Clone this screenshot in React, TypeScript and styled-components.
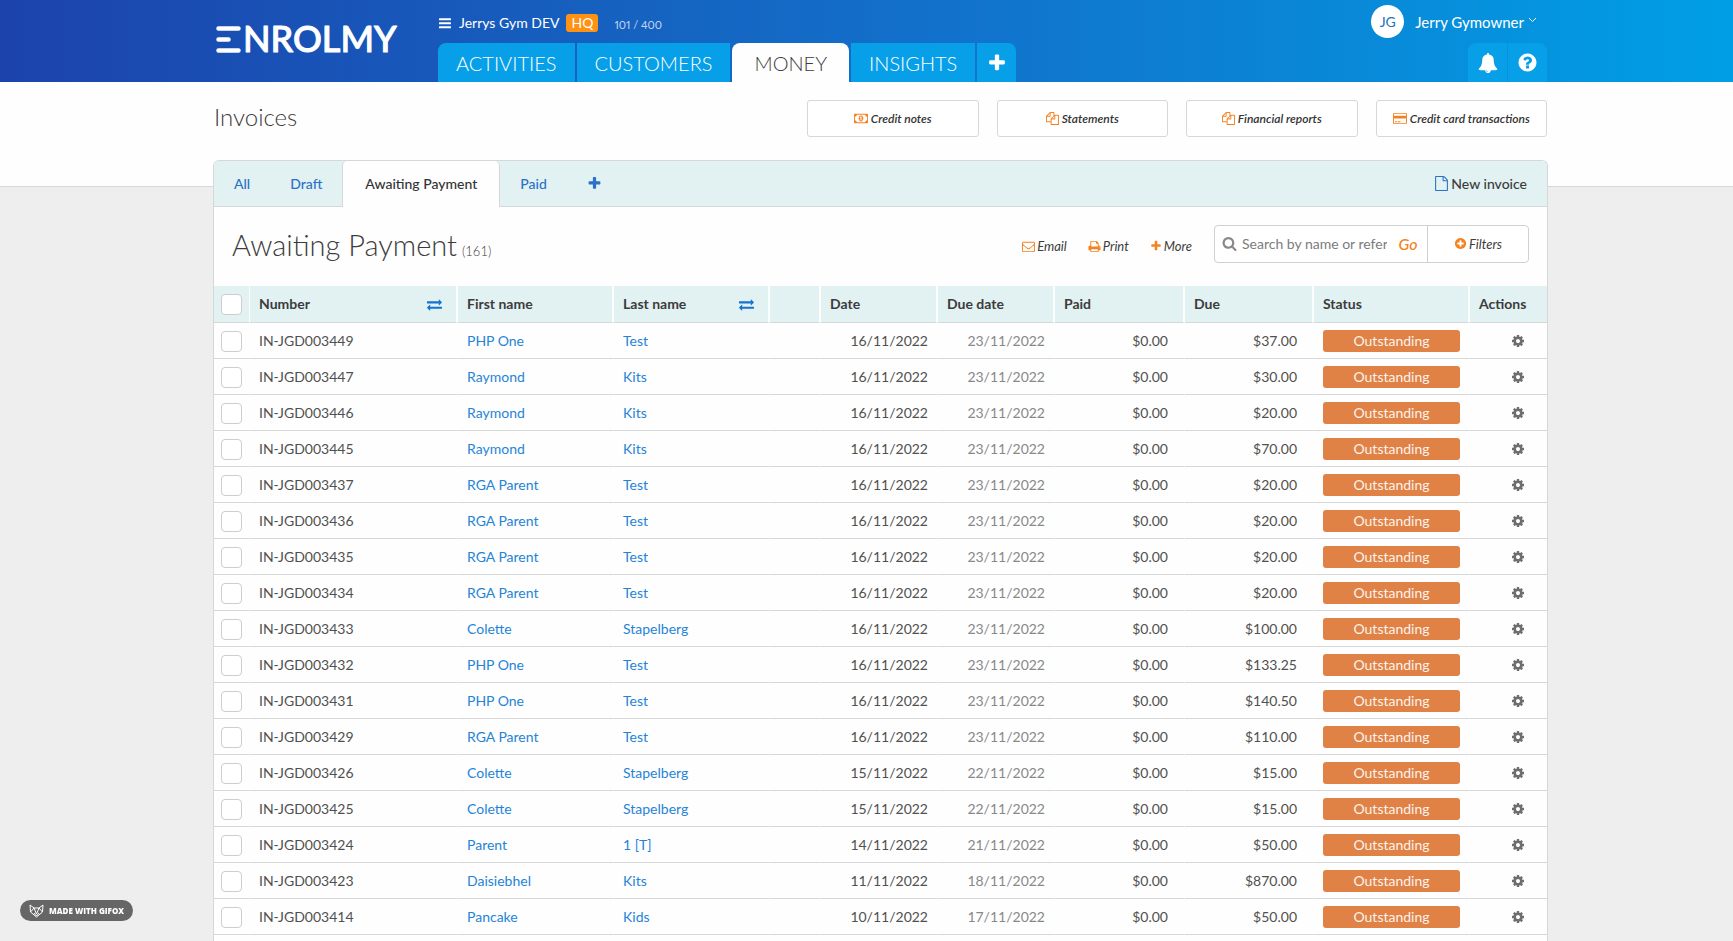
import React from "react";
import styled, { createGlobalStyle } from "styled-components";

const GlobalStyle = createGlobalStyle`
  *, *::before, *::after { box-sizing: border-box; }
  html, body { margin: 0; }
  body {
    font-family: Lato, "Liberation Sans", sans-serif;
    font-size: 15px;
    line-height: 20px;
    color: #3c3c3c;
    background: #eeeeee;
  }
  a { color: inherit; text-decoration: none; }
  button, input { font: inherit; color: inherit; }
  h1, h2, p, ul { margin: 0; padding: 0; font-weight: inherit; }
`;

const glyphs = {
  files: {
    w: 1792,
    d: "M1696 384q40 0 68 28t28 68v1216q0 40-28 68t-68 28h-960q-40 0-68-28t-28-68v-288h-544q-40 0-68-28t-28-68v-672q0-40 20-88t48-76l408-408q28-28 76-48t88-20h416q40 0 68 28t28 68v328q68-40 128-40h416zm-544 213l-299 299h299v-299zm-640-384l-299 299h299v-299zm196 647l316-316v-416h-384v416q0 40-28 68t-68 28h-416v640h512v-256q0-40 20-88t48-76zm956 804v-1152h-384v416q0 40-28 68t-68 28h-416v640h896z",
  },
  money: {
    w: 1920,
    d: "M768 1152h384v-96h-128v-448h-114l-148 137 77 80q42-37 55-57h2v288h-128v96zm512-256q0 70-21 142t-59.5 134-101.5 101-138 39-138-39-101.5-101-59.5-134-21-142 21-142 59.5-134 101.5-101 138-39 138 39 101.5 101 59.5 134 21 142zm512 256v-512q-106 0-181-75t-75-181h-1152q0 106-75 181t-181 75v512q106 0 181 75t75 181h1152q0-106 75-181t181-75zm128-832v1152q0 26-19 45t-45 19h-1792q-26 0-45-19t-19-45v-1152q0-26 19-45t45-19h1792q26 0 45 19t19 45z",
  },
  card: {
    w: 1920,
    d: "M1760 128q66 0 113 47t47 113v1216q0 66-47 113t-113 47h-1600q-66 0-113-47t-47-113v-1216q0-66 47-113t113-47h1600zm-1600 128q-13 0-22.5 9.5t-9.5 22.5v224h1664v-224q0-13-9.5-22.5t-22.5-9.5h-1600zm1600 1280q13 0 22.5-9.5t9.5-22.5v-608h-1664v608q0 13 9.5 22.5t22.5 9.5h1600zm-1504-128v-128h256v128h-256zm384 0v-128h384v128h-384z",
  },
  file: {
    w: 1792,
    d: "M1596 380q28 28 48 76t20 88v1152q0 40-28 68t-68 28h-1344q-40 0-68-28t-28-68v-1600q0-40 28-68t68-28h896q40 0 88 20t76 48zm-444-244v376h376q-10-29-22-41l-313-313q-12-12-41-22zm384 1528v-1024h-416q-40 0-68-28t-28-68v-416h-768v1536h1280z",
  },
  envelope: {
    w: 1792,
    d: "M1664 1504v-768q-32 36-69 66-268 206-426 338-51 43-83 67t-86.5 48.5-102.5 24.5h-2q-48 0-102.5-24.5t-86.5-48.5-83-67q-158-132-426-338-37-30-69-66v768q0 13 9.5 22.5t22.5 9.5h1472q13 0 22.5-9.5t9.5-22.5zm0-1051v-24.5l-.5-13-3-12.5-5.5-9-9-7.5-14-2.5h-1472q-13 0-22.5 9.5t-9.5 22.5q0 168 147 284 193 152 401 317 6 5 35 29.5t46 37.5 44.5 31.5 50.5 27.5 43 9h2q20 0 43-9t50.5-27.5 44.5-31.5 46-37.5 35-29.5q208-165 401-317 54-43 100.5-115.5t46.5-131.5zm128-37v1088q0 66-47 113t-113 47h-1472q-66 0-113-47t-47-113v-1088q0-66 47-113t113-47h1472q66 0 113 47t47 113z",
  },
  print: {
    w: 1792,
    d: "M448 1536h896v-256h-896v256zm0-640h896v-384h-160q-40 0-68-28t-28-68v-160h-640v640zm1152 64q0-26-19-45t-45-19-45 19-19 45 19 45 45 19 45-19 19-45zm128 0v416q0 13-9.5 22.5t-22.5 9.5h-224v160q0 40-28 68t-68 28h-960q-40 0-68-28t-28-68v-160h-224q-13 0-22.5-9.5t-9.5-22.5v-416q0-79 56.5-135.5t135.5-56.5h64v-544q0-40 28-68t68-28h672q40 0 88 20t76 48l152 152q28 28 48 76t20 88v256h64q79 0 135.5 56.5t56.5 135.5z",
  },
  plus: {
    w: 1792,
    d: "M1600 736v192q0 40-28 68t-68 28h-416v416q0 40-28 68t-68 28h-192q-40 0-68-28t-28-68v-416h-416q-40 0-68-28t-28-68v-192q0-40 28-68t68-28h416v-416q0-40 28-68t68-28h192q40 0 68 28t28 68v416h416q40 0 68 28t28 68z",
  },
  plusCircle: {
    w: 1792,
    d: "M1344 960v-128q0-26-19-45t-45-19h-256v-256q0-26-19-45t-45-19h-128q-26 0-45 19t-19 45v256h-256q-26 0-45 19t-19 45v128q0 26 19 45t45 19h256v256q0 26 19 45t45 19h128q26 0 45-19t19-45v-256h256q26 0 45-19t19-45zm320-64q0 209-103 385.5t-279.5 279.5-385.5 103-385.5-103-279.5-279.5-103-385.5 103-385.5 279.5-279.5 385.5-103 385.5 103 279.5 279.5 103 385.5z",
  },
  search: {
    w: 1792,
    d: "M1216 832q0-185-131.5-316.5t-316.5-131.5-316.5 131.5-131.5 316.5 131.5 316.5 316.5 131.5 316.5-131.5 131.5-316.5zm512 832q0 52-38 90t-90 38q-54 0-90-38l-343-342q-179 124-399 124-143 0-273.5-55.5t-225-150-150-225-55.5-273.5 55.5-273.5 150-225 225-150 273.5-55.5 273.5 55.5 225 150 150 225 55.5 273.5q0 220-124 399l343 343q37 37 37 90z",
  },
  cog: {
    w: 1792,
    d: "M1152 896q0-106-75-181t-181-75-181 75-75 181 75 181 181 75 181-75 75-181zm512-109v222q0 12-8 23t-20 13l-185 28q-19 54-39 91 35 50 107 138 10 12 10 25t-9 23q-27 37-99 108t-94 71q-12 0-26-9l-138-108q-44 23-91 38-16 136-29 186-7 28-36 28h-222q-14 0-24.5-8.5t-11.5-21.5l-28-184q-49-16-90-37l-141 107q-10 9-25 9-14 0-25-11-126-114-165-168-7-10-7-23 0-12 8-23 15-21 51-66.5t54-70.5q-27-50-41-99l-183-27q-13-2-21-12.5t-8-23.5v-222q0-12 8-23t19-13l186-28q14-46 39-92-40-57-107-138-10-12-10-24 0-10 9-23 26-36 98.5-107.5t94.5-71.5q13 0 26 10l138 107q44-23 91-38 16-136 29-186 7-28 36-28h222q14 0 24.5 8.5t11.5 21.5l28 184q49 16 90 37l142-107q9-9 24-9 13 0 25 10 129 119 165 170 7 8 7 22 0 12-8 23-15 21-51 66.5t-54 70.5q26 50 41 98l183 28q13 2 21 12.5t8 23.5z",
  },
  question: {
    w: 1792,
    d: "M1024 1376v-192q0-14-9-23t-23-9h-192q-14 0-23 9t-9 23v192q0 14 9 23t23 9h192q14 0 23-9t9-23zm256-672q0-88-55.5-163t-138.5-116-170-41q-243 0-371 213-15 24 8 42l132 100q7 6 19 6 16 0 25-12 53-68 86-92 34-24 86-24 48 0 85.5 26t37.5 59q0 38-20 61t-68 45q-63 28-115.5 86.5t-52.5 125.5v36q0 14 9 23t23 9h192q14 0 23-9t9-23q0-19 21.5-49.5t54.5-49.5q32-18 49-28.5t46-35 44.5-48 28-60.5 12.5-81zm384 192q0 209-103 385.5t-279.5 279.5-385.5 103-385.5-103-279.5-279.5-103-385.5 103-385.5 279.5-279.5 385.5-103 385.5 103 279.5 279.5 103 385.5z",
  },
  bell: {
    w: 1792,
    d: "M912 1696q0-16-16-16-59 0-101.5-42.5t-42.5-101.5q0-16-16-16t-16 16q0 73 51.5 124.5t124.5 51.5q16 0 16-16zm816-288q0 52-38 90t-90 38h-448q0 106-75 181t-181 75-181-75-75-181h-448q-52 0-90-38t-38-90q50-42 91-88t85-119.5 74.5-158.5 50-206 19.5-260q0-152 117-282.5t307-158.5q-8-19-8-39 0-40 28-68t68-28 68 28 28 68q0 20-8 39 190 28 307 158.5t117 282.5q0 139 19.5 260t50 206 74.5 158.5 85 119.5 91 88z",
  },
  bars: {
    w: 1792,
    d: "M192 288h1408q64 0 64 64v128q0 64-64 64h-1408q-64 0-64-64v-128q0-64 64-64zm0 512h1408q64 0 64 64v128q0 64-64 64h-1408q-64 0-64-64v-128q0-64 64-64zm0 512h1408q64 0 64 64v128q0 64-64 64h-1408q-64 0-64-64v-128q0-64 64-64z",
  },
  exchange: {
    w: 1792,
    d: "M1792 1184v192q0 13-9.5 22.5t-22.5 9.5h-1376v192q0 13-9.5 22.5t-22.5 9.5q-12 0-24-10l-319-320q-9-9-9-22 0-14 9-23l320-320q9-9 23-9 13 0 22.5 9.5t9.5 22.5v192h1376q13 0 22.5 9.5t9.5 22.5zm0-544q0 14-9 23l-320 320q-9 9-23 9-13 0-22.5-9.5t-9.5-22.5v-192h-1376q-13 0-22.5-9.5t-9.5-22.5v-192q0-13 9.5-22.5t22.5-9.5h1376v-192q0-14 9-23t23-9q12 0 24 10l319 319q9 9 9 23z",
  },
};

type GlyphName = keyof typeof glyphs;

const Glyph = styled.svg<{ $color?: string }>`
  display: block;
  flex: none;
  fill: ${(p) => p.$color ?? "currentColor"};
`;

function Icon({ name, size = 14, color }: { name: GlyphName; size?: number; color?: string }) {
  const g = glyphs[name];
  return (
    <Glyph
      $color={color}
      viewBox={`0 0 ${g.w} 1792`}
      width={Math.round((size * g.w) / 1792)}
      height={size}
      aria-hidden="true"
    >
      <path d={g.d} />
    </Glyph>
  );
}

const orange = "#f58220";
const line = "#d6d8d8";
const mint = "#e2f1f2";

const Page = styled.div`
  min-height: 100vh;
  display: flex;
  flex-direction: column;
  background: linear-gradient(#fefefe 186px, ${line} 186px, ${line} 187px, #eeeeee 187px);
`;

const Header = styled.header`
  height: 82px;
  padding: 0 186px 0 213px;
  display: flex;
  color: #fff;
  background: linear-gradient(90deg, #1c43ac, #1272cb 55%, #009fe5);
`;

const LogoLink = styled.a`
  width: 225px;
  padding: 16px 0 0 2px;
`;

const Wordmark = styled.text`
  font-family: Lato, sans-serif;
  font-size: 36px;
  font-weight: 500;
  fill: #fff;
  stroke: #fff;
  stroke-width: 1px;
  stroke-linejoin: round;
`;

const HeaderColumn = styled.div<{ $end?: boolean }>`
  display: flex;
  flex-direction: column;
  justify-content: space-between;
  align-items: ${(p) => (p.$end ? "flex-end" : "flex-start")};
  margin-left: ${(p) => (p.$end ? "auto" : "0")};
`;

const OrgBar = styled.div`
  display: flex;
  align-items: center;
  height: 43px;
  padding-top: 2px;
  font-size: 14px;
`;

const OrgButton = styled.button`
  display: flex;
  align-items: center;
  gap: 7px;
  padding: 0;
  border: 0;
  background: none;
`;

const HqBadge = styled.span`
  margin-left: 7px;
  padding: 0 5px;
  line-height: 18px;
  border-radius: 3px;
  background: #ff9212;
`;

const Quota = styled.span`
  margin: 4px 0 0 16px;
  font-size: 11px;
  font-variant-numeric: proportional-nums;
  color: #c5d6f0;
`;

const NavList = styled.nav<{ $gap: number }>`
  display: flex;
  gap: ${(p) => p.$gap}px;
`;

const NavTab = styled.a<{ $active?: boolean; $first?: boolean; $last?: boolean; $icon?: boolean }>`
  display: flex;
  align-items: center;
  justify-content: center;
  height: 39px;
  width: ${(p) => (p.$icon ? "39px" : "auto")};
  padding: ${(p) => (p.$icon ? "0" : p.$active ? "0 22px" : "0 18px")};
  border-radius: ${(p) =>
    p.$active ? "8px 8px 0 0" : `${p.$first ? "8px" : "0"} ${p.$last ? "8px" : "0"} 0 0`};
  font-size: 20px;
  font-weight: 300;
  color: ${(p) => (p.$active ? "#3c3c3c" : "#fff")};
  background: ${(p) => (p.$active ? "#fefefe" : "#079fe8")};
`;

const UserButton = styled.button`
  display: flex;
  align-items: center;
  height: 43px;
  padding: 0 10px 0 0;
  border: 0;
  background: none;
`;

const Avatar = styled.span`
  width: 33px;
  height: 33px;
  margin-right: 11px;
  border-radius: 50%;
  font-size: 14px;
  line-height: 33px;
  color: #1f6fc0;
  background: #fff;
`;

const Chevron = styled.svg`
  width: 9px;
  height: 6px;
  margin: 0 0 4px 4px;
  fill: none;
  stroke: #fff;
`;

const TitleBar = styled.div`
  height: 78px;
  padding: 18px 186px 0 214px;
  display: flex;
  justify-content: space-between;
`;

const PageTitle = styled.h1`
  font-size: 24px;
  font-weight: 300;
  line-height: 34px;
`;

const Shortcuts = styled.nav`
  display: grid;
  grid-template-columns: repeat(4, 1fr);
  gap: 18px;
  width: 740px;
  height: 37px;
`;

const Shortcut = styled.a`
  display: flex;
  align-items: center;
  justify-content: center;
  gap: 3px;
  border: 1px solid ${line};
  border-radius: 3px;
  font-size: 12px;
  font-weight: 600;
  font-style: italic;
  color: #333;
  background: #fff;
`;

const Panel = styled.main`
  flex: 1;
  margin: 0 185px 0 213px;
  border: 1px solid ${line};
  border-bottom: 0;
  border-radius: 6px 6px 0 0;
  background: #fefefe;
`;

const Tabs = styled.div`
  display: flex;
  height: 46px;
  padding-right: 20px;
  border-bottom: 1px solid ${line};
  border-radius: 5px 5px 0 0;
  background: ${mint};
`;

const Tab = styled.a<{ $active?: boolean }>`
  display: flex;
  align-items: center;
  height: ${(p) => (p.$active ? "46px" : "45px")};
  padding: 0 ${(p) => (p.$active ? "22px" : "20px")};
  border: solid ${line};
  border-width: ${(p) => (p.$active ? "0 1px" : "0")};
  border-radius: 5px 5px 0 0;
  font-size: 14px;
  font-weight: 500;
  color: ${(p) => (p.$active ? "#333" : "#2a72c8")};
  background: ${(p) => (p.$active ? "#fefefe" : "transparent")};
`;

const NewInvoice = styled.a`
  display: flex;
  align-items: center;
  gap: 2px;
  margin-left: auto;
  font-size: 14px;
  font-weight: 500;
`;

const ListHeader = styled.div`
  display: flex;
  align-items: center;
  height: 79px;
  padding: 0 18px 6px;
`;

const ListTitle = styled.h2`
  display: flex;
  align-items: baseline;
  gap: 5px;
  margin-right: auto;
  padding-top: 8px;
  font-size: 29px;
  font-weight: 300;
  line-height: 36px;
`;

const Count = styled.small`
  font-size: 13px;
`;

const Actions = styled.div`
  display: flex;
  gap: 21px;
  margin-right: 22px;
  padding-top: 5px;
`;

const ActionButton = styled.button`
  display: flex;
  align-items: center;
  gap: 2px;
  padding: 0;
  border: 0;
  background: none;
  font-size: 13px;
  font-style: italic;
`;

const SearchForm = styled.form`
  display: flex;
  align-items: center;
  width: 315px;
  height: 38px;
  border: 1px solid #cfd1d1;
  border-radius: 4px;
  background: #fff;
`;

const SearchLabel = styled.label`
  display: flex;
  align-items: center;
  gap: 5px;
  flex: 1;
  min-width: 0;
  padding-left: 7px;
`;

const SearchInput = styled.input`
  width: 145px;
  padding: 0;
  border: 0;
  outline: 0;
  background: none;
  font-size: 14px;
  &::placeholder { color: #7c7c7c; opacity: 1; }
`;

const GoButton = styled.button`
  width: 38px;
  padding: 0;
  border: 0;
  background: none;
  font-size: 16px;
  font-weight: 500;
  font-style: italic;
  color: ${orange};
`;

const FilterButton = styled(ActionButton)`
  justify-content: center;
  width: 101px;
  height: 36px;
  border-left: 1px solid #cfd1d1;
`;

const Table = styled.table`
  width: 100%;
  table-layout: fixed;
  border-spacing: 0;
  font-size: 14px;
`;

const Col = styled.col<{ $w: number }>`
  width: ${(p) => p.$w}px;
`;

const HeadCell = styled.th`
  height: 37px;
  padding: 0 9px;
  border-right: 2px solid #fcfefe;
  border-bottom: 1px solid ${line};
  font-weight: 700;
  text-align: left;
  background: ${mint};
  &:first-child { padding: 0 7px; border-right-width: 1px; }
  &:last-child { border-right: 0; }
`;

const SortLabel = styled.span`
  display: flex;
  align-items: center;
  justify-content: space-between;
  padding-right: 5px;
`;

const Cell = styled.td<{ $align?: "right"; $pad?: number; $tone?: string }>`
  height: 36px;
  padding: 0 ${(p) => p.$pad ?? 9}px 0 9px;
  border-right: 1px solid #fefefe;
  border-bottom: 1px solid ${line};
  white-space: nowrap;
  text-align: ${(p) => p.$align ?? "left"};
  color: ${(p) => p.$tone ?? "#505050"};
  &:first-child { padding: 1px 7px 0; }
  &:last-child { border-right: 0; }
`;

const Tick = styled.input`
  display: block;
  appearance: none;
  width: 21px;
  height: 21px;
  margin: 0;
  border: 1px solid #cdcdcd;
  border-radius: 4px;
  background: #fff;
`;

const NameLink = styled.a`
  color: #2584d6;
`;

const StatusBadge = styled.span`
  display: block;
  line-height: 22px;
  border-radius: 3px;
  text-align: center;
  color: #fdf3ec;
  background: #e08146;
`;

const RowMenu = styled.button`
  display: block;
  margin-left: auto;
  padding: 0;
  border: 0;
  background: none;
  color: #6e6e6e;
`;

const MadeWith = styled.a`
  position: fixed;
  left: 20px;
  bottom: 20px;
  display: flex;
  align-items: center;
  gap: 5px;
  height: 21px;
  padding: 0 9px;
  border-radius: 11px;
  font-family: "Open Sans", sans-serif;
  font-size: 8px;
  font-weight: 800;
  color: #fff;
  background: #666;
`;

const invoices: string[][] = [
  ["IN-JGD003449", "PHP One", "Test", "16/11/2022", "23/11/2022", "$37.00"],
  ["IN-JGD003447", "Raymond", "Kits", "16/11/2022", "23/11/2022", "$30.00"],
  ["IN-JGD003446", "Raymond", "Kits", "16/11/2022", "23/11/2022", "$20.00"],
  ["IN-JGD003445", "Raymond", "Kits", "16/11/2022", "23/11/2022", "$70.00"],
  ["IN-JGD003437", "RGA Parent", "Test", "16/11/2022", "23/11/2022", "$20.00"],
  ["IN-JGD003436", "RGA Parent", "Test", "16/11/2022", "23/11/2022", "$20.00"],
  ["IN-JGD003435", "RGA Parent", "Test", "16/11/2022", "23/11/2022", "$20.00"],
  ["IN-JGD003434", "RGA Parent", "Test", "16/11/2022", "23/11/2022", "$20.00"],
  ["IN-JGD003433", "Colette", "Stapelberg", "16/11/2022", "23/11/2022", "$100.00"],
  ["IN-JGD003432", "PHP One", "Test", "16/11/2022", "23/11/2022", "$133.25"],
  ["IN-JGD003431", "PHP One", "Test", "16/11/2022", "23/11/2022", "$140.50"],
  ["IN-JGD003429", "RGA Parent", "Test", "16/11/2022", "23/11/2022", "$110.00"],
  ["IN-JGD003426", "Colette", "Stapelberg", "15/11/2022", "22/11/2022", "$15.00"],
  ["IN-JGD003425", "Colette", "Stapelberg", "15/11/2022", "22/11/2022", "$15.00"],
  ["IN-JGD003424", "Parent", "1 [T]", "14/11/2022", "21/11/2022", "$50.00"],
  ["IN-JGD003423", "Daisiebhel", "Kits", "11/11/2022", "18/11/2022", "$870.00"],
  ["IN-JGD003414", "Pancake", "Kids", "10/11/2022", "17/11/2022", "$50.00"],
];

const columnWidths = [36, 208, 156, 156, 51, 117, 117, 130, 129, 156, 77];

const shortcuts: [GlyphName, string][] = [
  ["money", "Credit notes"],
  ["files", "Statements"],
  ["files", "Financial reports"],
  ["card", "Credit card transactions"],
];

function Logo() {
  return (
    <LogoLink href="#" aria-label="Enrolmy">
      <svg width="200" height="52" viewBox="0 0 200 52">
        <g stroke="#fff" strokeWidth="4.500" strokeLinecap="round">
          <path d="M3.500 12.500h20M3.500 23.500h10M3.500 34.500h20" />
        </g>
        <Wordmark x="28" y="36">NROLMY</Wordmark>
      </svg>
    </LogoLink>
  );
}

export default function App() {
  return (
    <Page>
      <GlobalStyle />
      <Header>
        <Logo />
        <HeaderColumn>
          <OrgBar>
            <OrgButton>
              <Icon name="bars" size={14} />
              Jerrys Gym DEV
            </OrgButton>
            <HqBadge>HQ</HqBadge>
            <Quota>101 / 400</Quota>
          </OrgBar>
          <NavList $gap={2}>
            <NavTab href="#" $first>ACTIVITIES</NavTab>
            <NavTab href="#">CUSTOMERS</NavTab>
            <NavTab href="#" $active>MONEY</NavTab>
            <NavTab href="#">INSIGHTS</NavTab>
            <NavTab href="#" $icon $last aria-label="Add">
              <Icon name="plus" size={20} />
            </NavTab>
          </NavList>
        </HeaderColumn>
        <HeaderColumn $end>
          <UserButton>
            <Avatar>JG</Avatar>
            Jerry Gymowner
            <Chevron viewBox="0 0 9 6"><path d="M1 1l3.500 3.500L8 1" /></Chevron>
          </UserButton>
          <NavList $gap={1}>
            <NavTab href="#" $icon $first aria-label="Notifications">
              <Icon name="bell" size={20} />
            </NavTab>
            <NavTab href="#" $icon $last aria-label="Help">
              <Icon name="question" size={21} />
            </NavTab>
          </NavList>
        </HeaderColumn>
      </Header>

      <TitleBar>
        <PageTitle>Invoices</PageTitle>
        <Shortcuts>
          {shortcuts.map(([icon, label]) => (
            <Shortcut href="#" key={label}>
              <Icon name={icon} size={13} color={orange} />
              {label}
            </Shortcut>
          ))}
        </Shortcuts>
      </TitleBar>

      <Panel>
        <Tabs>
          <Tab href="#">All</Tab>
          <Tab href="#">Draft</Tab>
          <Tab href="#" $active>Awaiting Payment</Tab>
          <Tab href="#">Paid</Tab>
          <Tab href="#" aria-label="Add view"><Icon name="plus" size={15} /></Tab>
          <NewInvoice href="#">
            <Icon name="file" size={15} color="#2a72c8" />
            New invoice
          </NewInvoice>
        </Tabs>

        <ListHeader>
          <ListTitle>Awaiting Payment <Count>(161)</Count></ListTitle>
          <Actions>
            <ActionButton><Icon name="envelope" size={13} color={orange} />Email</ActionButton>
            <ActionButton><Icon name="print" size={13} color={orange} />Print</ActionButton>
            <ActionButton><Icon name="plus" size={12} color={orange} />More</ActionButton>
          </Actions>
          <SearchForm>
            <SearchLabel>
              <Icon name="search" size={15} color="#888" />
              <SearchInput type="text" aria-label="Search invoices" placeholder="Search by name or reference" />
            </SearchLabel>
            <GoButton type="button">Go</GoButton>
            <FilterButton type="button">
              <Icon name="plusCircle" size={13} color={orange} />
              Filters
            </FilterButton>
          </SearchForm>
        </ListHeader>

        <Table>
          <colgroup>
            {columnWidths.map((w, i) => <Col key={i} $w={w} />)}
          </colgroup>
          <thead>
            <tr>
              <HeadCell><Tick type="checkbox" aria-label="Select all" /></HeadCell>
              <HeadCell><SortLabel>Number<Icon name="exchange" size={15} color="#1674cf" /></SortLabel></HeadCell>
              <HeadCell>First name</HeadCell>
              <HeadCell><SortLabel>Last name<Icon name="exchange" size={15} color="#1674cf" /></SortLabel></HeadCell>
              <HeadCell />
              <HeadCell>Date</HeadCell>
              <HeadCell>Due date</HeadCell>
              <HeadCell>Paid</HeadCell>
              <HeadCell>Due</HeadCell>
              <HeadCell>Status</HeadCell>
              <HeadCell>Actions</HeadCell>
            </tr>
          </thead>
          <tbody>
            {invoices.map(([number, first, last, date, dueDate, due]) => (
              <tr key={number}>
                <Cell><Tick type="checkbox" aria-label={`Select ${number}`} /></Cell>
                <Cell>{number}</Cell>
                <Cell><NameLink href="#">{first}</NameLink></Cell>
                <Cell><NameLink href="#">{last}</NameLink></Cell>
                <Cell />
                <Cell $align="right">{date}</Cell>
                <Cell $align="right" $tone="#888">{dueDate}</Cell>
                <Cell $align="right" $pad={16}>$0.00</Cell>
                <Cell $align="right" $pad={16}>{due}</Cell>
                <Cell><StatusBadge>Outstanding</StatusBadge></Cell>
                <Cell $pad={22}><RowMenu aria-label={`Actions for ${number}`}><Icon name="cog" size={14} /></RowMenu></Cell>
              </tr>
            ))}
          </tbody>
        </Table>
      </Panel>

      <MadeWith href="#">
        <svg width="15" height="14" viewBox="0 0 15 14" fill="none" stroke="#fff" aria-hidden="true">
          <path d="M1 1l4 3h5l4-3-.5 7-6 5-6-5zM1.500 8l3.500-4 2.500 6 2.500-6 3.500 4M5 9l2.500 3L10 9" />
        </svg>
        MADE WITH GIFOX
      </MadeWith>
    </Page>
  );
}
